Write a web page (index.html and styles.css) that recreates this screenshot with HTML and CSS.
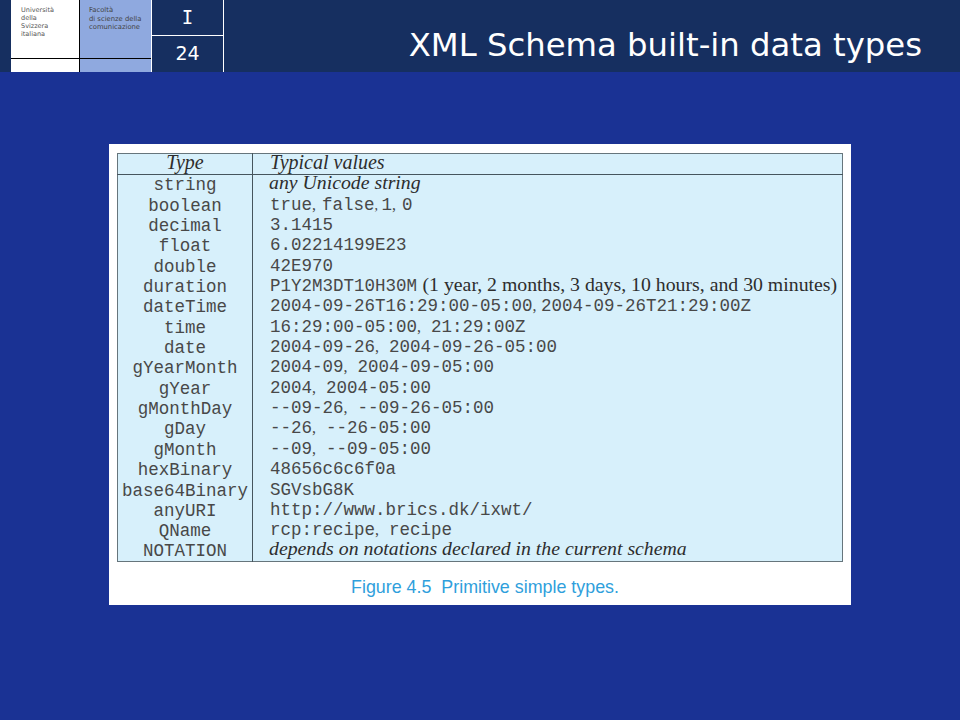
FILE: index.html
```html
<!DOCTYPE html>
<html lang="it">
<head>
<meta charset="utf-8">
<title>XML Schema built-in data types</title>
<link rel="stylesheet" href="styles.css">
</head>
<body>
<header class="bar">
  <div class="logo uni">
    <div class="logo-main">Università<br>della<br>Svizzera<br>italiana</div>
    <div class="logo-foot"></div>
  </div>
  <div class="logo fac">
    <div class="logo-main">Facoltà<br>di scienze della<br>comunicazione</div>
    <div class="logo-foot"></div>
  </div>
  <div class="pager">
    <div class="chapter">I</div>
    <div class="page">24</div>
  </div>
  <h1 class="title">XML Schema built-in data types</h1>
</header>
<main class="stage">
  <figure class="figure">
    <table class="types">
      <thead>
        <tr><th class="tcol">Type</th><th class="vcol">Typical values</th></tr>
      </thead>
      <tbody>
        <tr><td class="tcol">string</td><td class="vcol serif">any Unicode string</td></tr>
        <tr><td class="tcol">boolean</td><td class="vcol">true<span class="sep narrow">, </span>false<span class="sep tight">, </span>1<span class="sep narrow">, </span>0</td></tr>
        <tr><td class="tcol">decimal</td><td class="vcol">3.1415</td></tr>
        <tr><td class="tcol">float</td><td class="vcol">6.02214199E23</td></tr>
        <tr><td class="tcol">double</td><td class="vcol">42E970</td></tr>
        <tr><td class="tcol">duration</td><td class="vcol">P1Y2M3DT10H30M<span class="note">(1 year, 2 months, 3 days, 10 hours, and 30 minutes)</span></td></tr>
        <tr><td class="tcol">dateTime</td><td class="vcol">2004-09-26T16:29:00-05:00<span class="sep solid">,</span>2004-09-26T21:29:00Z</td></tr>
        <tr><td class="tcol">time</td><td class="vcol">16:29:00-05:00<span class="sep">, </span>21:29:00Z</td></tr>
        <tr><td class="tcol">date</td><td class="vcol">2004-09-26<span class="sep">, </span>2004-09-26-05:00</td></tr>
        <tr><td class="tcol">gYearMonth</td><td class="vcol">2004-09<span class="sep">, </span>2004-09-05:00</td></tr>
        <tr><td class="tcol">gYear</td><td class="vcol">2004<span class="sep">, </span>2004-05:00</td></tr>
        <tr><td class="tcol">gMonthDay</td><td class="vcol">--09-26<span class="sep">, </span>--09-26-05:00</td></tr>
        <tr><td class="tcol">gDay</td><td class="vcol">--26<span class="sep">, </span>--26-05:00</td></tr>
        <tr><td class="tcol">gMonth</td><td class="vcol">--09<span class="sep">, </span>--09-05:00</td></tr>
        <tr><td class="tcol">hexBinary</td><td class="vcol">48656c6c6f0a</td></tr>
        <tr><td class="tcol">base64Binary</td><td class="vcol">SGVsbG8K</td></tr>
        <tr><td class="tcol">anyURI</td><td class="vcol">http://www.brics.dk/ixwt/</td></tr>
        <tr><td class="tcol">QName</td><td class="vcol">rcp:recipe<span class="sep">, </span>recipe</td></tr>
        <tr><td class="tcol">NOTATION</td><td class="vcol serif">depends on notations declared in the current schema</td></tr>
      </tbody>
    </table>
    <figcaption class="caption">Figure 4.5&nbsp; Primitive simple types.</figcaption>
  </figure>
</main>
</body>
</html>
```
FILE: styles.css
```css
* { box-sizing: border-box; }
html, body { margin: 0; padding: 0; }
body {
  width: 960px;
  height: 720px;
  overflow: hidden;
  background: #1a3294;
  font-family: "DejaVu Sans", sans-serif;
}
.bar {
  display: flex;
  height: 72px;
  padding-left: 11px;
  background: #162f60;
}
.logo {
  display: flex;
  flex-direction: column;
  height: 72px;
  color: #555;
  font-size: 6.5px;
  line-height: 8px;
}
.logo-main {
  height: 59px;
  padding: 6px 0 0 10px;
  border-bottom: 1px solid #000;
}
.uni { width: 69px; background: #fff; border-right: 1px solid #000; }
.fac { width: 71px; background: #8fa9df; font-size: 6.8px; line-height: 8.5px; color: #444; }
.fac .logo-main { padding-left: 9px; }
.pager {
  display: flex;
  flex-direction: column;
  width: 73px;
  height: 72px;
  border-left: 1px solid #fff;
  border-right: 1px solid #fff;
  color: #fff;
  text-align: center;
}
.chapter {
  height: 36px;
  border-bottom: 1px solid #fff;
  font-family: "DejaVu Sans Mono", monospace;
  font-size: 19px;
  line-height: 35px;
}
.page { font-size: 19px; line-height: 35px; }
.title {
  flex: 1;
  margin: 0;
  padding: 25px 38px 0 0;
  color: #fff;
  font-size: 32.3px;
  font-weight: 400;
  line-height: 41px;
  text-align: right;
  white-space: nowrap;
}
.stage { padding: 72px 109px 0; }
.figure {
  width: 742px;
  height: 461px;
  margin: 0;
  padding: 9px 8px 0;
  background: #fff;
}
.types {
  width: 726px;
  table-layout: fixed;
  border-collapse: collapse;
  border: 1px solid #66757c;
  background: #d7f0fb;
  color: #484848;
  font-family: "Liberation Mono", monospace;
  font-size: 17.5px;
}
.types th {
  height: 21px;
  padding: 0 0 4px;
  border-bottom: 1px solid #46555d;
  color: #2d2d2d;
  font-family: "Liberation Serif", serif;
  font-size: 20px;
  font-style: italic;
  font-weight: 400;
  line-height: 15px;
}
.types td { height: 20.37px; padding: 0; line-height: 19px; white-space: nowrap; }
.tcol { width: 135px; border-right: 1px solid #46555d; text-align: center; }
.types td.tcol { padding-top: 1px; line-height: 18px; }
.types .vcol { padding-left: 17px; text-align: left; }
.types td.serif {
  padding: 0 0 4px 16px;
  color: #2d2d2d;
  font-family: "Liberation Serif", serif;
  font-size: 19.8px;
  font-style: italic;
  line-height: 15px;
}
.note {
  margin-left: 5.5px;
  color: #2d2d2d;
  font-family: "Liberation Serif", serif;
  font-size: 19.8px;
  line-height: 0;
}
.sep {
  margin-right: 6px;
  font-family: "Liberation Serif", serif;
  font-size: 16px;
  line-height: 0;
}
.sep.narrow { margin-right: 2px; }
.sep.tight { margin-right: 0; font-size: 14px; }
.sep.solid { margin-right: 4.5px; }
.caption {
  padding: 15px 0 0 234px;
  color: #2f9fdc;
  font-family: "Liberation Sans", sans-serif;
  font-size: 17.87px;
  line-height: 20px;
  white-space: nowrap;
}
```
